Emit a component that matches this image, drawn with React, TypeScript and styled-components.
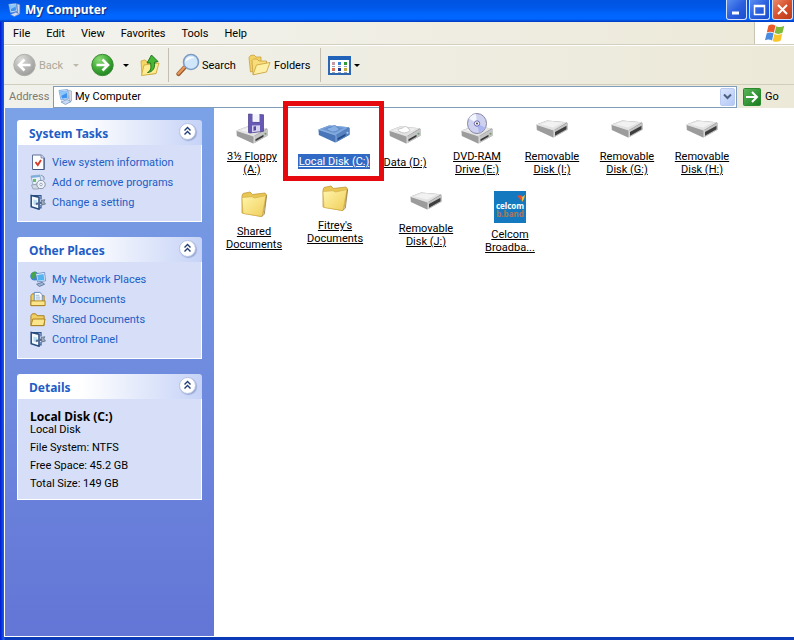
import React from 'react';
import styled, { createGlobalStyle, css } from 'styled-components';

const GlobalStyle = createGlobalStyle`
  * { box-sizing: border-box; }
  body { margin: 0; background: #fff; }
  body, button, input {
    font-family: Roboto, "Noto Sans", sans-serif;
    font-size: 11px;
    line-height: 13px;
    color: #000;
  }
  button { margin: 0; padding: 0; border: 0; background: none; }
  svg { display: block; flex: none; }
`;

/* ---------- window frame ---------- */

const Window = styled.div`
  display: flex;
  flex-direction: column;
  min-height: 100vh;
  border-left: 4px solid #0b3fe0;
  border-bottom: 3px solid #0a35b8;
  border-image: linear-gradient(90deg, #0019cf, #1662ee 4px, #0a3ab8 5px) 0 0 3 4;
  background: #fff;
`;

const TitleBar = styled.header`
  display: flex;
  align-items: center;
  height: 22px;
  margin-left: -4px;
  padding: 0 1px 2px 7px;
  background: linear-gradient(#0053e0 0, #0058ea 8px, #0066ff 15px, #0066ff 19px, #0048d8 21px, #0038b8 22px);
`;

const Title = styled.h1`
  flex: 1;
  margin: 0 0 0 4px;
  color: #fff;
  font-family: "Noto Sans", sans-serif;
  font-size: 12px;
  line-height: 16px;
  font-weight: 700;
  text-shadow: 1px 1px 1px #0a2a80;
`;

const WindowButtons = styled.div`
  display: flex;
  gap: 2px;
`;

const WindowButton = styled.button<{ $close?: boolean }>`
  display: grid;
  place-items: center;
  width: 21px;
  height: 20px;
  border: 1px solid #d5e0fa;
  border-top: 0;
  border-radius: 0 0 3px 3px;
  background: ${p => (p.$close
    ? 'linear-gradient(135deg, #e88a6c, #d8502c 50%, #b83a18)'
    : 'linear-gradient(135deg, #5a8ef0, #2a5fe0 50%, #1c4ccc)')};
`;

const MenuRow = styled.div`
  display: flex;
  height: 23px;
  border-bottom: 1px solid #d2cfc0;
  background: linear-gradient(90deg, #f3f3ef, #ece9d8);
`;

const Menu = styled.nav`
  display: flex;
  flex: 1;
  padding-left: 1px;
`;

const MenuButton = styled.button`
  padding: 0 8px;
`;

const FlagBox = styled.div`
  display: grid;
  place-items: center;
  width: 40px;
  border-left: 1px solid #c8c5b5;
  background: #fff;
`;

/* ---------- toolbar ---------- */

const Toolbar = styled.div`
  display: flex;
  align-items: center;
  height: 40px;
  padding-left: 9px;
  border-top: 1px solid #fff;
  border-bottom: 1px solid #d0cdbd;
  background: linear-gradient(90deg, #f1f1ec, #ece9d8);
`;

const ToolButton = styled.button<{ $width: number; $muted?: boolean; $gap?: number }>`
  display: flex;
  align-items: center;
  gap: ${p => p.$gap ?? 4}px;
  width: ${p => p.$width}px;
  height: 34px;
  white-space: nowrap;
  color: ${p => (p.$muted ? '#aca899' : '#000')};
`;

const Caret = styled.span<{ $muted?: boolean }>`
  width: 0;
  border: 3px solid transparent;
  border-top-color: ${p => (p.$muted ? '#bdb9aa' : '#000')};
  border-bottom: 0;
`;

const Divider = styled.span`
  width: 1px;
  height: 34px;
  margin-right: 7px;
  background: #c3c0b2;
`;

/* ---------- address bar ---------- */

const AddressBar = styled.form`
  display: flex;
  align-items: center;
  height: 23px;
  padding-left: 5px;
  background: linear-gradient(90deg, #f1f1ec, #ece9d8);
`;

const AddressLabel = styled.label`
  width: 44px;
  color: #7d7a6d;
`;

const AddressField = styled.div`
  display: flex;
  align-items: center;
  flex: 1;
  height: 22px;
  padding: 1px 1px 1px 3px;
  border: 1px solid #7f9db9;
  background: #fff;
`;

const AddressInput = styled.input`
  flex: 1;
  min-width: 0;
  padding: 0 0 0 2px;
  border: 0;
  outline: 0;
  background: none;
`;

const DropButton = styled.button`
  display: grid;
  place-items: center;
  width: 15px;
  height: 18px;
  border: 1px solid #b9cbf3;
  border-radius: 2px;
  background: linear-gradient(135deg, #dbe6fe, #b4c8f6);
`;

const GoButton = styled.button`
  display: flex;
  align-items: center;
  gap: 4px;
  width: 57px;
  padding-left: 6px;
`;

/* ---------- body ---------- */

const Body = styled.div`
  display: flex;
  flex: 1;
  border-left: 1px solid #fff;
  border-bottom: 1px solid #fff;
`;

const Sidebar = styled.aside`
  display: flex;
  flex-direction: column;
  gap: 15px;
  flex: none;
  width: 209px;
  padding: 12px;
  background: linear-gradient(#7ba2e7, #6375d6);
`;

const PanelHeader = styled.div`
  display: flex;
  align-items: center;
  justify-content: space-between;
  height: 25px;
  padding: 0 6px 0 12px;
  border-radius: 3px 3px 0 0;
  background: linear-gradient(90deg, #fff 35%, #c6d3f7);
`;

const PanelTitle = styled.h2`
  margin: 0;
  padding-top: 2px;
  color: #215dc6;
  font-family: "Noto Sans", sans-serif;
  font-size: 12px;
  line-height: 13px;
  font-weight: 700;
`;

const CollapseButton = styled.button`
  display: grid;
  place-items: center;
  width: 17px;
  height: 17px;
  margin-bottom: 3px;
  border: 1px solid #b5c2e4;
  border-radius: 50%;
  background: #fff;
  box-shadow: 1px 1px 1px #9aaad4;
`;

const PanelBody = styled.div`
  padding: 6px 12px 9px;
  border: 1px solid #fff;
  border-top: 0;
  background: #d6dff7;
`;

const TaskList = styled.ul`
  margin: 1px 0 0;
  padding: 0;
  list-style: none;
`;

const TaskLink = styled.a`
  display: flex;
  align-items: center;
  gap: 6px;
  height: 20px;
  color: #215dc6;
  text-decoration: none;
  white-space: nowrap;
`;

const DetailName = styled.h3`
  margin: 0;
  padding-top: 5px;
  font-family: "Noto Sans", sans-serif;
  font-size: 12px;
  line-height: 13px;
  font-weight: 700;
`;

const DetailLine = styled.p<{ $tight?: boolean }>`
  margin: 0;
  ${p => !p.$tight && css`padding-top: 5px;`}
`;

/* ---------- free icon canvas ---------- */

const Canvas = styled.main`
  position: relative;
  flex: 1;
  background: #fff;
`;

const Item = styled.a<{ $x: number; $y: number }>`
  position: absolute;
  left: ${p => p.$x}px;
  top: ${p => p.$y}px;
  display: flex;
  flex-direction: column;
  align-items: center;
  gap: 4px;
  width: 74px;
  color: #000;
  text-align: center;
  text-decoration: none;
`;

const ItemLabel = styled.span<{ $selected?: boolean }>`
  padding: 1px;
  white-space: pre-line;
  text-decoration: underline;
  ${p => p.$selected && css`
    background: #316ac5;
    color: #fff;
    white-space: nowrap;
  `}
`;

const Highlight = styled.div`
  position: absolute;
  left: 69px;
  top: -7px;
  width: 101px;
  height: 80px;
  border: 5px solid #e60a0f;
`;

/* ---------- icons ---------- */

const ComputerIcon = ({ size = 16 }: { size?: number }) => (
  <svg width={size} height={size} viewBox="0 0 16 16">
    <path d="M2 1.500L10.500.5l1 9L4 11z" fill="#e2f0ff" stroke="#6d9ad8" strokeWidth=".8" />
    <path d="M3.200 2.500l6.500-.8.800 7-5.700 1z" fill="#3f92ee" />
    <path d="M3.200 2.500l6.500-.8.300 2.300-6 3z" fill="#8cc6fa" />
    <path d="M11.500 1l3 1v10l-2 1.500z" fill="#d3d9e6" stroke="#8d9bb5" strokeWidth=".6" />
    <path d="M4 13l6-2.500 4 2L8.500 15.500z" fill="#c9dcf4" stroke="#6f8fc0" strokeWidth=".7" />
  </svg>
);

const FlagIcon = () => (
  <svg width="20" height="19" viewBox="0 0 20 19">
    <path d="M3.500 1.500c2.500-1.500 5-1 7 .2L8.800 8.700c-2-1.200-4.500-1.500-7-.2z" fill="#ea5a2a" />
    <path d="M11.300 2.200c2.700 1.300 5.200 1 8-.4l-1.800 7c-2.700 1.400-5.200 1.500-7.900.3z" fill="#7fbb3a" />
    <path d="M1.600 9.400c2.500-1.200 5-1 7 .2L7 16.500c-2-1.200-4.500-1.500-7-.2z" fill="#4a8be0" />
    <path d="M9.400 10c2.700 1.300 5.200 1 7.900-.3l-1.700 7c-2.700 1.400-5.200 1.500-7.900.2z" fill="#f8c62c" />
  </svg>
);

const RoundArrowIcon = ({ back }: { back?: boolean }) => {
  const id = back ? 'roundBack' : 'roundForward';
  return (
    <svg width="23" height="24" viewBox="0 0 23 24">
      <defs>
        <radialGradient id={id} cx=".35" cy=".25" r=".85">
          <stop offset="0" stopColor={back ? '#dcdcda' : '#8bdc76'} />
          <stop offset=".55" stopColor={back ? '#b4b4b2' : '#3fa836'} />
          <stop offset="1" stopColor={back ? '#969694' : '#1c7a1c'} />
        </radialGradient>
      </defs>
      <circle cx="11.500" cy="12" r="10.700" fill={`url(#${id})`} stroke={back ? '#b0b0ad' : '#3a8e34'} />
      <path
        d={back ? 'M17.500 12H7M11.500 6.500L6 12l5.500 5.500' : 'M5.500 12H16M11.500 6.500L17 12l-5.500 5.500'}
        fill="none" stroke="#fff" strokeWidth="2.600"
      />
    </svg>
  );
};

const UpFolderIcon = () => (
  <svg width="20" height="24" viewBox="0 0 20 24">
    <path d="M1 8l4-1 2 1.500 9-1v13L2 22z" fill="#f5d565" stroke="#c9a43a" strokeWidth=".8" />
    <path d="M4 12l15-2-3 10.500L1.500 22.500z" fill="#fdeb91" stroke="#c9a432" strokeWidth=".8" />
    <path d="M7.500 19.500c3.500-1.500 3.800-5 3-9.500H7l4.500-8L18 8.500l-3.500.8c.8 5.500-1.500 9.700-7 10.200z" fill="#45b636" stroke="#176e16" strokeWidth=".9" />
  </svg>
);

const SearchIcon = () => (
  <svg width="24" height="24" viewBox="0 0 24 24">
    <path d="M8.500 14.500L2.500 21" stroke="#9a5a2a" strokeWidth="4.200" strokeLinecap="round" />
    <path d="M8.500 14L2.500 20.500" stroke="#e79a5c" strokeWidth="2.500" strokeLinecap="round" />
    <circle cx="15" cy="9" r="7.500" fill="#cfe6fb" stroke="#7d9cc4" strokeWidth="1.600" />
    <path d="M9.500 9a5.500 5.500 0 0 1 9-4c-4 0-7 2-9 4z" fill="#fff" />
  </svg>
);

const FoldersIcon = () => (
  <svg width="23" height="22" viewBox="0 0 23 22">
    <path d="M1 3.500l1.500-2L6 1l2 2h5v12L2.500 18z" fill="#f3d264" stroke="#c9a03c" strokeWidth=".8" />
    <path d="M4 6.500L5.500 5H9l2 2h7.500v10L5 20.500z" fill="#f8dd7a" stroke="#c9a03c" strokeWidth=".8" />
    <path d="M8.500 11L22 8.500 18.500 18 5 20.800z" fill="#fdf0a4" stroke="#c7a03a" strokeWidth=".8" />
  </svg>
);

const ViewsIcon = () => (
  <svg width="23" height="19" viewBox="0 0 23 19">
    <path d="M1 1h21v17H1z" fill="#fff" stroke="#2e66b0" strokeWidth="2" />
    <path d="M0 0h23v4H0z" fill="#2163b8" />
    <path d="M4 6h3v3H4z" fill="#c49aa6" /><path d="M10 6h3v3h-3z" fill="#3a82d8" /><path d="M16 6h3v3h-3z" fill="#2f9a3c" />
    <path d="M4 12h3v3H4z" fill="#d8705a" /><path d="M10 12h3v3h-3z" fill="#24368e" /><path d="M16 12h3v3h-3z" fill="#c3a83c" />
    <path d="M4 10.500h3M10 10.500h3M16 10.500h3M4 16.500h3M10 16.500h3M16 16.500h3" stroke="#9aa4b4" />
  </svg>
);

const GoIcon = () => (
  <svg width="18" height="18" viewBox="0 0 18 18">
    <defs>
      <linearGradient id="goFill" x1="0" y1="0" x2="1" y2="1">
        <stop offset="0" stopColor="#5cb85a" /><stop offset="1" stopColor="#167a1c" />
      </linearGradient>
    </defs>
    <rect x=".5" y=".5" width="17" height="17" rx="1" fill="url(#goFill)" stroke="#2b8a30" />
    <path d="M3 9h10M9 4l5 5-5 5" fill="none" stroke="#fff" strokeWidth="2" />
  </svg>
);

const ChevronsIcon = () => (
  <svg width="9" height="10" viewBox="0 0 9 10">
    <path d="M1.500 4.500l3-3 3 3M1.500 8.500l3-3 3 3" fill="none" stroke="#1f3b78" strokeWidth="1.400" />
  </svg>
);

const InfoIcon = () => (
  <svg width="16" height="16" viewBox="0 0 16 16">
    <path d="M2.500 1h9l2.500 2.500v12H2.500z" fill="#fff" stroke="#5f7196" />
    <path d="M3 15.500h11.200V4" fill="none" stroke="#3f5480" />
    <path d="M11 1v3h3" fill="#d4dcec" stroke="#5f7196" strokeWidth=".7" />
    <path d="M5.500 8l2.300 3L11 6" fill="none" stroke="#d43c2e" strokeWidth="1.900" />
  </svg>
);

const ProgramsIcon = () => (
  <svg width="16" height="16" viewBox="0 0 16 16">
    <path d="M1 2l9-1 1 8-8 2z" fill="#e8f0f8" stroke="#8aa2c0" strokeWidth=".8" />
    <path d="M1 2l9-1v2l-9 1z" fill="#7aaede" /><path d="M3 5h3v3H3z" fill="#6cb86c" />
    <path d="M1.500 11l7-1v5H3z" fill="#d2d9e4" stroke="#8593a8" strokeWidth=".7" />
    <circle cx="11" cy="10.500" r="4.200" fill="#eef2f8" stroke="#6d7d96" strokeWidth=".8" />
    <circle cx="11" cy="10.500" r="1.300" fill="#fff" stroke="#7888a0" strokeWidth=".7" />
    <path d="M11 1l3 2v3" fill="none" stroke="#7f95b5" />
  </svg>
);

const SettingsIcon = () => (
  <svg width="16" height="16" viewBox="0 0 16 16">
    <path d="M1.500 1.500h9.500v4M11 11v3L9 14" fill="none" stroke="#2f568c" strokeWidth="1.200" />
    <path d="M1.200 1.500l7.800 1.700v12l-7.800-2.400z" fill="#f4faff" stroke="#24487c" strokeWidth="1.500" />
    <path d="M3.500 5.500l3.500 1v5l-3.500-1z" fill="#b8dcf4" />
    <path d="M6 10l7-1.800" stroke="#53698c" strokeWidth="2" />
    <path d="M11 6.500l3.800-.8-1 2.300 1.700 2-3.700 1z" fill="#9eabbf" stroke="#4e617e" strokeWidth=".7" />
  </svg>
);

const NetworkIcon = () => (
  <svg width="16" height="16" viewBox="0 0 17 17">
    <circle cx="5" cy="5.500" r="4.700" fill="#3c84d8" />
    <path d="M.8 4c2-4 5-4 6-3 0 3-2 3-2 7-2 1-4 0-4-4z" fill="#46a546" />
    <path d="M6 3l9.500-1.500 1 9-8.500 1z" fill="#e9f3ff" stroke="#577fb8" strokeWidth=".8" />
    <path d="M7.500 4.200l6.900-1 .8 6.300-6.500.9z" fill="#55b4f0" />
    <path d="M7 14l6-2 2.500 2L10 16.500z" fill="#9fb4d4" stroke="#4d668e" strokeWidth=".8" />
  </svg>
);

const SmallFolder = ({ paper }: { paper?: boolean }) => (
  <svg width="16" height="16" viewBox="0 0 17 16">
    <path d="M1 4.500l1.500-2H6l1.500 2h7.500v10.500H1z" fill="#f2cf63" stroke="#a97d1d" />
    {paper && <path d="M4.500 1h6L13 3.500V11H4.500z" fill="#fff" stroke="#5d86bd" />}
    {paper && <path d="M6 4h4M6 6h5M6 8h5" stroke="#8db0d8" />}
    <path d={paper ? 'M1 10h15v5H1z' : 'M3 8h13l-1.500 7H1z'} fill="#fbe58a" stroke="#a97d1d" />
  </svg>
);

/* Three-quarter view of a slim drive case. */
const Drive = ({ selected, removable }: { selected?: boolean; removable?: boolean }) => (
  <g>
    <path d="M.5 11.500L11 7.500l20 1.800 .5 1.500v6L18.500 24 17 24.500.8 17z" fill={selected ? '#4976b8' : '#9c9c9c'} />
    <path d="M.5 11.500L11 7.500l20 1.800-13 7.700z" fill={selected ? '#7da6dc' : '#e2e2e2'} />
    <path d="M4 11.300L12 8.500l14.500 1.300-9.500 4.800z" fill={selected ? '#6993cf' : '#f2f2f2'} />
    <path d="M18 17.500l13.500-7.700v7L18 24.300z" fill={selected ? '#5682c2' : '#c4c4c4'} />
    {removable
      ? <path d="M19 19l11.500-6.300v3.500L19 22.700z" fill="#3e3e3e" />
      : <path d="M19.500 20.200l8-4.400v2l-8 4.400z" fill={selected ? '#254b86' : '#3a3a3a'} />}
    {!removable && <circle cx="29.500" cy="14.800" r="1" fill={selected ? '#b4cef0' : '#6c9a6c'} />}
    <path d="M.5 11.500L18 17.200v7" fill="none" stroke={selected ? '#9dbfe8' : '#f6f6f6'} strokeWidth=".7" />
  </g>
);

const DriveIcon = ({ selected, removable }: { selected?: boolean; removable?: boolean }) => (
  <svg width="32" height="32" viewBox="0 0 32 32">
    <Drive selected={selected} removable={removable} />
    {!removable && (
      <path
        d="M9 10.500c2-1.500 4-.5 5-2s5-1 5 .5 3 1 2 2.500-5 3-7.500 2.200S8 11.500 9 10.500z"
        fill={selected ? '#88b0e4' : '#fff'} stroke={selected ? '#5580bd' : '#b2b2b2'} strokeWidth=".7"
      />
    )}
  </svg>
);

const FloppyIcon = () => (
  <svg width="32" height="32" viewBox="0 0 32 32">
    <g transform="translate(0 6)"><Drive /></g>
    <path d="M12.500 1l4 .3v7.500l7 .2V1.500l4 .3v16.500L14 20l-1.500-.5z" fill="#6658b4" stroke="#453a88" strokeWidth=".7" />
    <path d="M16.500 1.300l7 .3V9l-7-.2z" fill="#f3f3fc" />
    <path d="M16 12.500l8-.3v6l-8 1z" fill="#d5d3ee" />
    <path d="M17.500 13.500l2.500-.2v4l-2.500.4z" fill="#5648a0" />
  </svg>
);

const DiscIcon = () => (
  <svg width="32" height="32" viewBox="0 0 32 32">
    <g transform="translate(0 6)"><Drive /></g>
    <ellipse cx="16" cy="10.500" rx="9.500" ry="10" fill="#cfd2ee" stroke="#8686a8" />
    <path d="M16 10.500L8 5.500a9 9 0 0 1 7-4.500z" fill="#f3f6ff" />
    <path d="M16 10.500l8 4a9 9 0 0 1-6 5z" fill="#aab4f0" />
    <circle cx="16" cy="10.500" r="2.700" fill="#f5f5fb" stroke="#6a64b4" /><circle cx="16" cy="10.500" r="1" fill="#444" />
  </svg>
);

const FolderIcon = () => (
  <svg width="32" height="32" viewBox="0 0 32 32">
    <defs>
      <linearGradient id="folderFill" x1="0" y1="0" x2="1" y2="1">
        <stop offset="0" stopColor="#fff6ac" /><stop offset="1" stopColor="#f0cd58" />
      </linearGradient>
    </defs>
    <path d="M4 8l1-2.500L12 4l2.500 2.500L27 5l1.500 2-3.500 19-2 2.500L4 25z" fill="#e9c654" stroke="#c39a38" strokeWidth=".8" />
    <path d="M4 9.500l10-.8L16.500 10l11.500-2.500-4 21L5 25.500z" fill="url(#folderFill)" stroke="#d3b04c" strokeWidth=".7" />
    <path d="M23.800 28.500l2.500-2.500 2.300-18.500" fill="none" stroke="#8d763e" strokeWidth=".8" />
  </svg>
);

const LogoTile = styled.span`
  display: flex;
  position: relative;
  flex-direction: column;
  justify-content: flex-end;
  width: 32px;
  height: 32px;
  padding-bottom: 5px;
  background: #1479be;
  color: #fff;
  font-family: "Noto Sans", sans-serif;
  font-size: 8px;
  line-height: 8px;
  font-weight: 700;
`;

const LogoBand = styled.span`
  color: #a8795c;
`;

const LogoSpark = styled.svg`
  position: absolute;
  top: 3px;
  right: 1px;
`;

const CelcomIcon = () => (
  <LogoTile>
    <LogoSpark width="8" height="9" viewBox="0 0 8 9">
      <path d="M0 2l3-1 4 3-2 4-2-3z" fill="#e84a32" /><path d="M4 1l1 2 3-2-1 4-2 3V4z" fill="#f3be36" />
    </LogoSpark>
    <span>celcom</span>
    <LogoBand>b.band</LogoBand>
  </LogoTile>
);

/* ---------- content ---------- */

const panels = [
  {
    title: 'System Tasks',
    links: [
      { text: 'View system information', icon: <InfoIcon /> },
      { text: 'Add or remove programs', icon: <ProgramsIcon /> },
      { text: 'Change a setting', icon: <SettingsIcon /> },
    ],
  },
  {
    title: 'Other Places',
    links: [
      { text: 'My Network Places', icon: <NetworkIcon /> },
      { text: 'My Documents', icon: <SmallFolder paper /> },
      { text: 'Shared Documents', icon: <SmallFolder /> },
      { text: 'Control Panel', icon: <SettingsIcon /> },
    ],
  },
];

const items = [
  { label: '3½ Floppy\n(A:)', x: 1, y: 5, icon: <FloppyIcon /> },
  { label: 'Local Disk (C:)', x: 83, y: 10, icon: <DriveIcon selected />, selected: true },
  { label: 'Data (D:)', x: 154, y: 11, icon: <DriveIcon /> },
  { label: 'DVD-RAM\nDrive (E:)', x: 226, y: 5, icon: <DiscIcon /> },
  { label: 'Removable\nDisk (I:)', x: 301, y: 5, icon: <DriveIcon removable /> },
  { label: 'Removable\nDisk (G:)', x: 376, y: 5, icon: <DriveIcon removable /> },
  { label: 'Removable\nDisk (H:)', x: 451, y: 5, icon: <DriveIcon removable /> },
  { label: 'Shared\nDocuments', x: 3, y: 80, icon: <FolderIcon /> },
  { label: "Fitrey's\nDocuments", x: 84, y: 74, icon: <FolderIcon /> },
  { label: 'Removable\nDisk (J:)', x: 175, y: 77, icon: <DriveIcon removable /> },
  { label: 'Celcom\nBroadba...', x: 259, y: 83, icon: <CelcomIcon /> },
];

const Header = ({ title }: { title: string }) => (
  <PanelHeader>
    <PanelTitle>{title}</PanelTitle>
    <CollapseButton type="button" aria-label={`Collapse ${title}`}><ChevronsIcon /></CollapseButton>
  </PanelHeader>
);

export default function App() {
  return (
    <>
      <GlobalStyle />
      <Window>
        <TitleBar>
          <ComputerIcon size={14} />
          <Title>My Computer</Title>
          <WindowButtons>
            <WindowButton type="button" aria-label="Minimize">
              <svg width="13" height="13"><path d="M2 10h7" stroke="#fff" strokeWidth="3" /></svg>
            </WindowButton>
            <WindowButton type="button" aria-label="Maximize">
              <svg width="13" height="13"><path d="M1.500 2.500h10v9h-10zM1 3.500h11" fill="none" stroke="#fff" strokeWidth="1.500" /></svg>
            </WindowButton>
            <WindowButton type="button" aria-label="Close" $close>
              <svg width="13" height="13"><path d="M2 2l9 9M11 2l-9 9" stroke="#fff" strokeWidth="2" /></svg>
            </WindowButton>
          </WindowButtons>
        </TitleBar>

        <MenuRow>
          <Menu>
            {['File', 'Edit', 'View', 'Favorites', 'Tools', 'Help'].map(name => (
              <MenuButton type="button" key={name}>{name}</MenuButton>
            ))}
          </Menu>
          <FlagBox><FlagIcon /></FlagBox>
        </MenuRow>

        <Toolbar>
          <ToolButton type="button" $width={60} $gap={3} $muted><RoundArrowIcon back />Back</ToolButton>
          <ToolButton type="button" $width={18} $muted aria-label="Back history"><Caret $muted /></ToolButton>
          <ToolButton type="button" $width={32} aria-label="Forward"><RoundArrowIcon /></ToolButton>
          <ToolButton type="button" $width={17} aria-label="Forward history"><Caret /></ToolButton>
          <ToolButton type="button" $width={28} aria-label="Up"><UpFolderIcon /></ToolButton>
          <Divider />
          <ToolButton type="button" $width={72} $gap={2}><SearchIcon />Search</ToolButton>
          <ToolButton type="button" $width={72} $gap={3}><FoldersIcon />Folders</ToolButton>
          <Divider />
          <ToolButton type="button" $width={36} $gap={3} aria-label="Views"><ViewsIcon /><Caret /></ToolButton>
        </Toolbar>

        <AddressBar onSubmit={e => e.preventDefault()}>
          <AddressLabel htmlFor="address">Address</AddressLabel>
          <AddressField>
            <ComputerIcon />
            <AddressInput id="address" defaultValue="My Computer" />
            <DropButton type="button" aria-label="Show addresses">
              <svg width="9" height="7"><path d="M1 1.500l3.500 3.500L8 1.500" fill="none" stroke="#4d6185" strokeWidth="2" /></svg>
            </DropButton>
          </AddressField>
          <GoButton type="submit"><GoIcon />Go</GoButton>
        </AddressBar>

        <Body>
          <Sidebar>
            {panels.map(panel => (
              <section key={panel.title}>
                <Header title={panel.title} />
                <PanelBody>
                  <TaskList>
                    {panel.links.map(link => (
                      <li key={link.text}><TaskLink href="#">{link.icon}{link.text}</TaskLink></li>
                    ))}
                  </TaskList>
                </PanelBody>
              </section>
            ))}
            <section>
              <Header title="Details" />
              <PanelBody>
                <DetailName>Local Disk (C:)</DetailName>
                <DetailLine $tight>Local Disk</DetailLine>
                <DetailLine>File System: NTFS</DetailLine>
                <DetailLine>Free Space: 45.2 GB</DetailLine>
                <DetailLine>Total Size: 149 GB</DetailLine>
              </PanelBody>
            </section>
          </Sidebar>

          <Canvas>
            {items.map(item => (
              <Item href="#" key={item.label} $x={item.x} $y={item.y}>
                {item.icon}
                <ItemLabel $selected={item.selected}>{item.label}</ItemLabel>
              </Item>
            ))}
            <Highlight />
          </Canvas>
        </Body>
      </Window>
    </>
  );
}
